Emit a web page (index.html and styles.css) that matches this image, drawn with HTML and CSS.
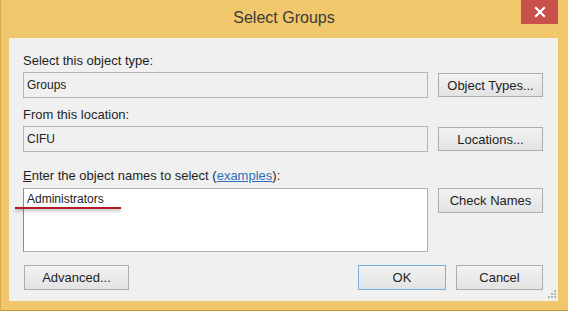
FILE: index.html
```html
<!DOCTYPE html>
<html>
<head>
<meta charset="utf-8">
<link rel="stylesheet" href="styles.css">
</head>
<body>
<div class="window">
  <div class="titlebar">
    <span class="title">Select Groups</span>
    <div class="close">
      <svg width="12" height="12" viewBox="0 0 12 12"><path d="M2 2 L10 10 M10 2 L2 10" stroke="#fff" stroke-width="2.2" stroke-linecap="square"/></svg>
    </div>
  </div>
  <div class="client">
    <div class="label">Select this object type:</div>
    <div class="row">
      <div class="box">Groups</div>
      <div class="btn">Object Types...</div>
    </div>
    <div class="label">From this location:</div>
    <div class="row">
      <div class="box">CIFU</div>
      <div class="btn">Locations...</div>
    </div>
    <div class="label label-names"><u>E</u>nter the object names to select (<a class="link">examples</a>):</div>
    <div class="row row-top">
      <div class="area">Administrators</div>
      <div class="btn btn-tall">Check Names</div>
    </div>
    <div class="footer">
      <div class="btn btn-adv">Advanced...</div>
      <div class="footer-right">
        <div class="btn btn-ok">OK</div>
        <div class="btn btn-cancel">Cancel</div>
      </div>
    </div>
    <div class="mark"></div>
    <svg class="grip" width="10" height="10" viewBox="0 0 10 10">
      <rect x="7" y="1" width="2" height="2" fill="#b8b8b8"/>
      <rect x="4" y="4" width="2" height="2" fill="#b8b8b8"/>
      <rect x="7" y="4" width="2" height="2" fill="#b8b8b8"/>
      <rect x="1" y="7" width="2" height="2" fill="#b8b8b8"/>
      <rect x="4" y="7" width="2" height="2" fill="#b8b8b8"/>
      <rect x="7" y="7" width="2" height="2" fill="#b8b8b8"/>
    </svg>
  </div>
</div>
</body>
</html>
```

FILE: styles.css
```css
* { box-sizing: border-box; }
html, body { margin: 0; padding: 0; }
body {
  width: 568px;
  height: 311px;
  overflow: hidden;
  font-family: "Liberation Sans", Arial, sans-serif;
  font-size: 13px;
  color: #1a1a1a;
}
.window {
  width: 568px;
  height: 311px;
  background: #f0c76a;
  border-left: 1px solid #d9ad4c;
  border-bottom: 1px solid #c99a3c;
  display: flex;
  flex-direction: column;
}
.titlebar {
  height: 38px;
  position: relative;
  display: flex;
  align-items: center;
  justify-content: center;
  padding-bottom: 2px;
}
.title {
  font-size: 16px;
  color: #3a3a3a;
  margin-left: -1px;
}
.close {
  position: absolute;
  top: 0;
  right: 10px;
  width: 37px;
  height: 24px;
  background: #c9514c;
  display: flex;
  align-items: center;
  justify-content: center;
}
.client {
  position: relative;
  flex: 1;
  margin: 0 10px 9px 8px;
  background: #f0f0f0;
  padding: 15px 15px 0 14px;
  display: flex;
  flex-direction: column;
}
.label {
  height: 15px;
  line-height: 15px;
  margin-bottom: 4px;
  color: #1e1e1e;
}
.link { color: #2f6fb8; text-decoration: underline; }
.row {
  display: grid;
  grid-template-columns: 405px 105px;
  column-gap: 10px;
  align-items: center;
}
.row-top { align-items: start; }
.row + .label { margin-top: 9px; }
.row + .label-names { margin-top: 16px; margin-bottom: 5px; }
.box {
  height: 26px;
  border: 1px solid #b5b5b5;
  background: #f0f0f0;
  line-height: 24px;
  padding-left: 3px;
  font-size: 12px;
  color: #222;
}
.area {
  height: 64px;
  border: 1px solid #b0b0b0;
  border-left-color: #8c8c8c;
  background: #fff;
  padding: 3px 3px;
  line-height: 15px;
  font-size: 12px;
  color: #222;
}
.btn {
  height: 24px;
  border: 1px solid #adadad;
  background: linear-gradient(#f2f2f2, #e3e3e3);
  display: flex;
  align-items: center;
  justify-content: center;
  color: #1e1e1e;
}
.btn-tall { height: 25px; }
.footer {
  margin-top: 13px;
  display: flex;
  justify-content: space-between;
  align-items: center;
}
.footer .btn { height: 25px; }
.btn-adv { width: 105px; margin-left: 1px; }
.footer-right { display: flex; gap: 10px; }
.btn-ok { width: 88px; border-color: #79aee0; }
.btn-cancel { width: 87px; }
.mark {
  position: absolute;
  left: 6px;
  top: 169px;
  width: 106px;
  height: 2px;
  background: #b01a22;
  box-shadow: 0 2px 3px rgba(0,0,0,0.3);
}
.grip {
  position: absolute;
  right: 1px;
  bottom: 2px;
}
```
